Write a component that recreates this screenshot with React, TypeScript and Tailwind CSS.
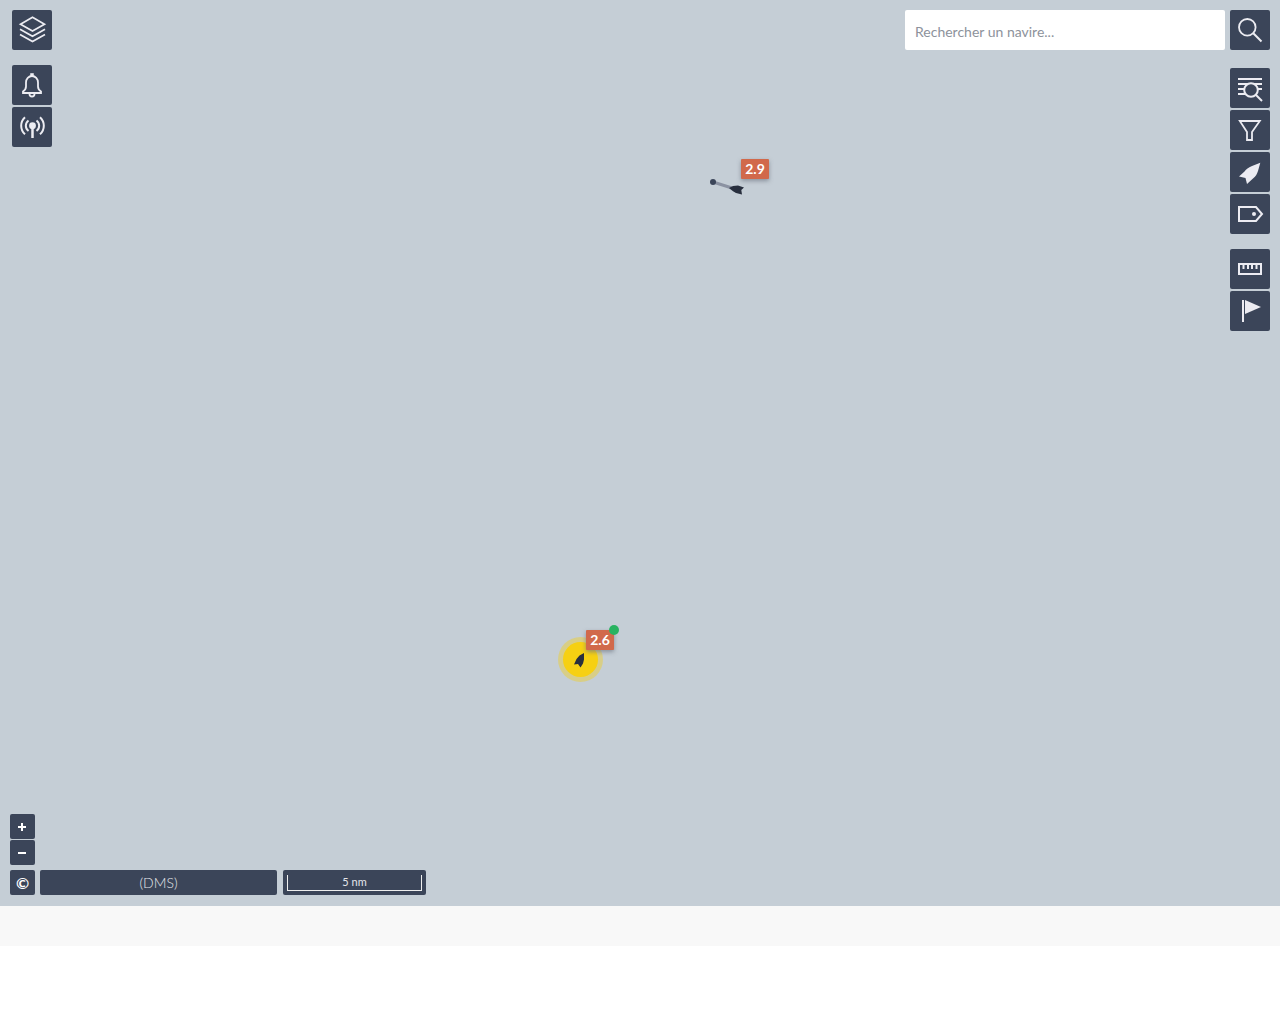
import type { ReactNode } from "react";

function MapButton({ label, children }: { label: string; children: ReactNode }) {
  return (
    <button type="button" aria-label={label} className="size-10 shrink-0 rounded-xs bg-[#3b4559] text-[#ececf2]">
      <svg viewBox="0 0 40 40" className="size-10" fill="none" stroke="currentColor" strokeWidth="2" aria-hidden="true">
        {children}
      </svg>
    </button>
  );
}

function SmallButton({ label, children }: { label: string; children: ReactNode }) {
  return (
    <button
      type="button"
      aria-label={label}
      className="flex size-[25px] shrink-0 items-center justify-center rounded-xs bg-[#3b4559] text-white"
    >
      <svg viewBox="0 0 25 25" className="size-[25px]" fill="none" stroke="currentColor" strokeWidth="2" aria-hidden="true">
        {children}
      </svg>
    </button>
  );
}

function Risk({ children }: { children: ReactNode }) {
  return (
    <span className="flex h-5 w-7 items-center justify-center rounded-[1px] bg-[#d1694b] text-sm leading-5 font-bold text-white shadow-[0_2px_4px_rgba(112,119,133,0.7)]">
      {children}
    </span>
  );
}

function Vessels() {
  return (
    <>
      <div className="absolute top-[150px] left-[700px] h-[50px] w-20">
        <svg viewBox="0 0 80 50" className="h-[50px] w-20" aria-hidden="true">
          <path d="M13 32 L32 38" stroke="#8b92a2" strokeWidth="3" />
          <circle cx="13" cy="32" r="3" fill="#3b4559" />
          <path d="M29 38 L33 36 L38 35.500 L44 37.500 L41.300 40 L42 44.500 L36 43 L33 41.300 Z" fill="#282f3e" />
        </svg>
        <div className="absolute top-[9px] left-[41px]">
          <Risk>2.9</Risk>
        </div>
      </div>
      <div className="absolute top-[615px] left-[550px] h-[75px] w-20">
        <svg viewBox="0 0 80 75" className="h-[75px] w-20" aria-hidden="true">
          <circle cx="30.500" cy="44.500" r="22.500" fill="#f6d012" fillOpacity="0.4" />
          <circle cx="30.500" cy="44.500" r="17.500" fill="#f6d012" />
          <path d="M34 38 L29.500 40.500 L26.500 44 L24 49.500 L28 49 L30.500 52.500 L33 48.500 L34 44.500 Z" fill="#282f3e" />
        </svg>
        <div className="absolute top-[15px] left-9">
          <Risk>2.6</Risk>
        </div>
        <span className="absolute top-[10px] left-[59px] size-[10px] rounded-full bg-[#29b361]" />
      </div>
    </>
  );
}

export default function App() {
  return (
    <div className="min-h-screen bg-white font-['Lato','Open_Sans',sans-serif]">
      <main className="relative flex h-[calc(100vh-118px)] flex-col justify-between bg-[#c5ced6]">
        <Vessels />

        <div className="relative flex items-start justify-between py-[10px] pr-[10px] pl-3">
          <nav aria-label="Couches et alertes" className="flex flex-col gap-[15px]">
            <MapButton label="Couches">
              <g strokeWidth="1.700">
                <path d="M20.500 7.300 L32.500 14.200 L20.500 21 L8.500 14.200 Z" />
                <path d="M8 19.300 L20.500 26.300 L33 19.300 M8 24.500 L20.500 31.500 L33 24.500" />
              </g>
            </MapButton>
            <div className="flex flex-col gap-[2px]">
              <MapButton label="Alertes">
                <path
                  d="M11 28 V26.500 Q14 24.500 14 21.500 V17.500 A6 6.500 0 0 1 26 17.500 V21.500 Q26 24.500 29 26.500 V28 Z"
                  strokeWidth="1.800"
                />
                <path d="M20 8.200 V11" strokeWidth="3.500" />
                <path d="M17.500 28 V29 A2.500 2.500 0 0 0 22.500 29 V28" strokeWidth="1.800" />
              </MapButton>
              <MapButton label="Signaux">
                <circle cx="20.500" cy="18.700" r="3.400" fill="currentColor" stroke="none" />
                <path d="M20.500 19 V31" strokeWidth="2.500" />
                <path d="M16.500 13.500 A6.500 6.500 0 0 0 16.500 24 M24.500 13.500 A6.500 6.500 0 0 1 24.500 24 M13 10.200 A11.500 11.500 0 0 0 13 27.300 M28 10.200 A11.500 11.500 0 0 1 28 27.300" />
              </MapButton>
            </div>
          </nav>

          <div className="flex flex-col items-end gap-[18px]">
            <form role="search" className="flex gap-[5px]" onSubmit={(e) => e.preventDefault()}>
              <input
                type="text"
                aria-label="Rechercher un navire"
                placeholder="Rechercher un navire..."
                className="h-10 w-80 rounded-xs bg-white px-[10px] pt-[2px] text-sm text-[#3b4559] placeholder:text-[#8d929b]"
              />
              <MapButton label="Rechercher">
                <circle cx="17.300" cy="17.300" r="8.300" strokeWidth="1.800" />
                <path d="M23.300 23.300 L31.500 31.500" />
              </MapButton>
            </form>
            <nav aria-label="Outils" className="flex flex-col gap-[15px]">
              <div className="flex flex-col gap-[2px]">
                <MapButton label="Liste des navires">
                  <path d="M8 11 H32 M8 16 H32 M8 21 H14 M28 21 H32 M8 26 H15" />
                  <circle cx="21" cy="22" r="6.800" fill="#3b4559" />
                  <path d="M26 27 L32 33" />
                </MapButton>
                <MapButton label="Filtres">
                  <path d="M9.800 11 H29.800 L22 22 V30 H17 V22 Z" strokeWidth="1.800" />
                </MapButton>
                <MapButton label="Navires">
                  <path
                    d="M30.300 10.700 L22 14 C18 15.700 16.500 17 14.500 19.500 L9 24.500 L15.500 26 L17 32 L23 26.500 C26 24 27 22 28 19 Z"
                    fill="currentColor"
                    stroke="none"
                  />
                </MapButton>
                <MapButton label="Étiquettes">
                  <path d="M9 13 H26 L32 20 L26 27 H9 Z" />
                  <circle cx="24" cy="20" r="2" fill="currentColor" stroke="none" />
                </MapButton>
              </div>
              <div className="flex flex-col gap-[2px]">
                <MapButton label="Mesurer">
                  <path d="M9 15 H31 V25 H9 Z M13.500 15 V20 M18 15 V20 M22 15 V20 M26.500 15 V20" />
                </MapButton>
                <MapButton label="Points d'intérêt">
                  <path d="M13 9 V31" />
                  <path d="M15 9 L31 16 L15 23 Z" fill="currentColor" stroke="none" />
                </MapButton>
              </div>
            </nav>
          </div>
        </div>

        <div className="relative flex flex-col gap-[5px] px-[10px] pb-[11px]">
          <div className="flex flex-col gap-px">
            <SmallButton label="Zoomer">
              <path d="M8 13 H16 M12 9 V17" />
            </SmallButton>
            <SmallButton label="Dézoomer">
              <path d="M8 13 H16" />
            </SmallButton>
          </div>
          <div className="flex">
            <button type="button" aria-label="Crédits" className="size-[25px] rounded-xs bg-[#3b4559] text-base leading-6 font-bold text-white">
              ©
            </button>
            <button type="button" className="ml-[5px] h-[25px] w-[237px] rounded-xs bg-[#3b4559] text-sm font-light text-[#e5e5eb]">
              (DMS)
            </button>
            <div className="ml-[6px] h-[25px] w-[143px] rounded-xs bg-[#3b4559] px-1 pt-[5px]">
              <div className="h-4 border border-t-0 border-[#eeeeee] text-center text-[11px] leading-[14px] text-[#e5e5eb]">5 nm</div>
            </div>
          </div>
        </div>
      </main>
      <footer className="h-10 bg-[#f8f8f8]" />
    </div>
  );
}
